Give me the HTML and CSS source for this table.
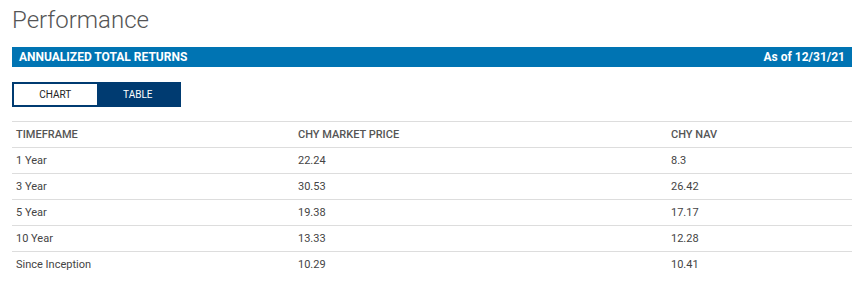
FILE: index.html
```html
<!DOCTYPE html>
<html>
<head>
<meta charset="utf-8">
<link rel="stylesheet" href="styles.css">
</head>
<body>
<div class="page">
  <h1 class="title">Performance</h1>
  <div class="bar">
    <span>ANNUALIZED TOTAL RETURNS</span>
    <span>As of 12/31/21</span>
  </div>
  <div class="toggle">
    <button class="tab">CHART</button>
    <button class="tab active">TABLE</button>
  </div>
  <table class="perf">
    <thead>
      <tr><th class="c1">TIMEFRAME</th><th class="c2">CHY MARKET PRICE</th><th>CHY NAV</th></tr>
    </thead>
    <tbody>
      <tr><td>1 Year</td><td>22.24</td><td>8.3</td></tr>
      <tr><td>3 Year</td><td>30.53</td><td>26.42</td></tr>
      <tr><td>5 Year</td><td>19.38</td><td>17.17</td></tr>
      <tr><td>10 Year</td><td>13.33</td><td>12.28</td></tr>
      <tr><td>Since Inception</td><td>10.29</td><td>10.41</td></tr>
    </tbody>
  </table>
</div>
</body>
</html>
```
FILE: styles.css
```css
html, body { margin: 0; padding: 0; background: #fff; }
body { font-family: Roboto, "Liberation Sans", sans-serif; }
.page { padding: 6px 12px 0 12px; width: 840px; }
.title {
  margin: 0;
  font-size: 24px;
  font-weight: 300;
  color: #555;
  line-height: 28px;
  height: 28px;
}
.bar {
  margin-top: 13px;
  height: 20px;
  background: #0074b3;
  color: #fff;
  font-weight: 700;
  font-size: 12px;
  display: flex;
  justify-content: space-between;
  align-items: center;
  padding: 0 7px;
}
.toggle {
  margin-top: 15px;
  display: flex;
  width: 169px;
  height: 25px;
  box-sizing: border-box;
  border: 2px solid #003b71;
}
.tab {
  flex: 1;
  border: 0;
  margin: 0;
  padding: 0;
  font-family: inherit;
  font-size: 10px;
  background: #fff;
  color: #222;
}
.tab.active { background: #003b71; color: #fff; }
.perf {
  margin-top: 14px;
  width: 840px;
  border-collapse: collapse;
  font-size: 11px;
}
.perf th, .perf td {
  text-align: left;
  padding: 0 4px;
  height: 25px;
  border-top: 1px solid #ddd;
  border-bottom: 1px solid #ddd;
}
.perf th { font-weight: 500; color: #555; font-size: 11px; }
.perf td { color: #444; }
.perf tbody tr:last-child td { border-bottom: 0; }
.c1 { width: 274px; }
.c2 { width: 365px; }
```
